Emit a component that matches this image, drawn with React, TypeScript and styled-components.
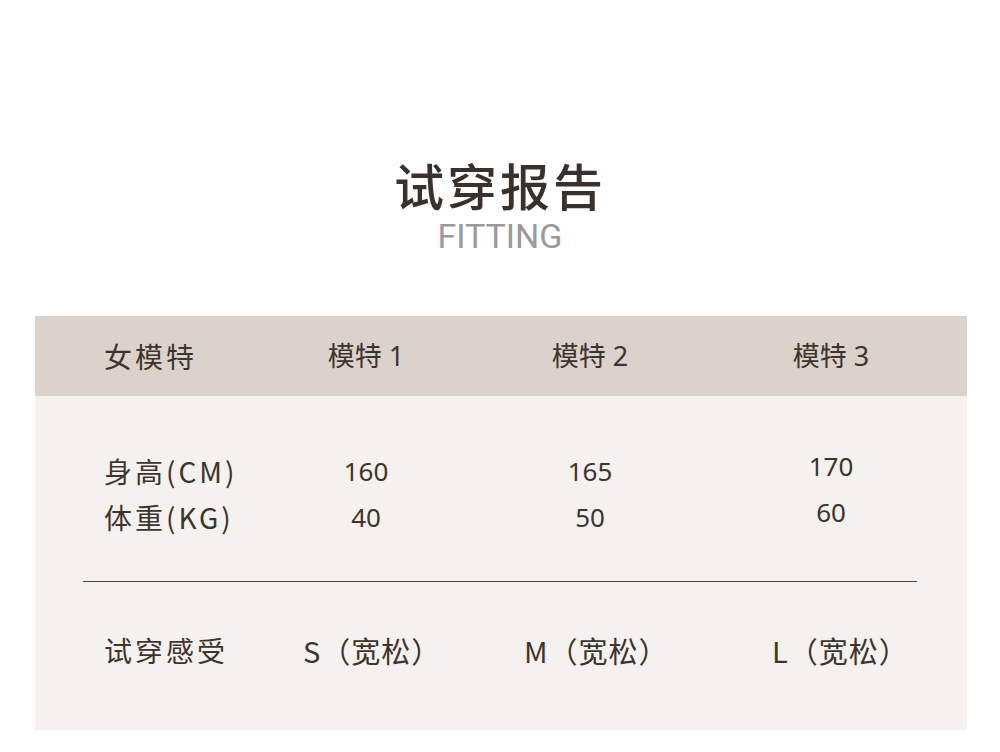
import React from "react"
import styled, { createGlobalStyle } from "styled-components"

const GlobalStyle = createGlobalStyle`
  html, body {
    margin: 0;
    padding: 0;
    background: #fff;
  }
  body {
    font-family: "Noto Sans", "Noto Sans CJK SC", sans-serif;
    color: #3d342e;
  }
`

const Page = styled.div`
  width: 1000px;
  height: 752px;
  background: #fff;
  overflow: hidden;
`

const Heading = styled.div`
  display: flex;
  flex-direction: column;
  align-items: center;
  padding-top: 155px;
  height: 316px;
  box-sizing: border-box;
`

const Title = styled.h1`
  margin: 0;
  font-family: "Noto Sans CJK SC", sans-serif;
  font-size: 50px;
  font-weight: 500;
  line-height: 58px;
  letter-spacing: 3px;
  color: #3b312c;
`

const Subtitle = styled.div`
  font-family: Roboto, "Noto Sans", sans-serif;
  font-size: 34px;
  line-height: 34px;
  color: #9a9a9a;
  margin-top: 6px;
`

const Table = styled.div`
  margin: 0 33px 0 35px;
  display: flex;
  flex-direction: column;
`

const Grid = styled.div`
  display: grid;
  grid-template-columns: 152px 220px 228px 254px;
  align-items: center;
  padding-left: 69px;
`

const HeaderRow = styled(Grid)`
  height: 80px;
  background: #dbd2cc;
`

const Body = styled.div`
  background: #f4f1ee;
  height: 334px;
  display: flex;
  flex-direction: column;
`

const Row = styled(Grid)<{ $height: number; $shift: number }>`
  height: ${(p) => p.$height}px;
  box-sizing: border-box;
  padding-top: ${(p) => Math.max(p.$shift, 0) * 2}px;
  padding-bottom: ${(p) => Math.max(-p.$shift, 0) * 2}px;
`

const Divider = styled.div`
  height: 1px;
  background: #4a413b;
  margin: 0 50px 0 48px;
`

const Label = styled.div`
  font-family: "Noto Sans CJK SC", sans-serif;
  font-size: 28px;
  letter-spacing: 3px;
  line-height: 46px;
  font-weight: 400;
  white-space: nowrap;
`

const Cell = styled.div<{ $lift?: number }>`
  font-family: "Noto Sans", "Noto Sans CJK SC", sans-serif;
  font-size: 26px;
  line-height: 46px;
  text-align: center;
  white-space: nowrap;
  padding-bottom: ${(p) => (p.$lift ? p.$lift * 2 : 0)}px;
`

const Head = styled(Cell)`
  font-size: 27px;
`

const Feel = styled(Cell)<{ $pad: number }>`
  font-family: "Noto Sans CJK SC", sans-serif;
  font-size: 29px;
  letter-spacing: 1px;
  text-align: left;
  padding-left: ${(p) => p.$pad}px;
`

const models = [
  { name: "模特 1", height: "160", weight: "40", size: "S", lift: 0, pad: 47 },
  { name: "模特 2", height: "165", weight: "50", size: "M", lift: 0, pad: 48 },
  { name: "模特 3", height: "170", weight: "60", size: "L", lift: 5, pad: 68 },
]

export default function App() {
  return (
    <Page>
      <GlobalStyle />
      <Heading>
        <Title>试穿报告</Title>
        <Subtitle>FITTING</Subtitle>
      </Heading>
      <Table>
        <HeaderRow>
          <Label>女模特</Label>
          {models.map((m) => (
            <Head key={m.name}>{m.name}</Head>
          ))}
        </HeaderRow>
        <Body>
          <Row $height={185} $shift={5}>
            <div>
              <Label>身高(CM)</Label>
              <Label>体重(KG)</Label>
            </div>
            {models.map((m) => (
              <Cell key={m.name} $lift={m.lift}>
                <div>{m.height}</div>
                <div>{m.weight}</div>
              </Cell>
            ))}
          </Row>
          <Divider />
          <Row $height={148} $shift={-6}>
            <Label>试穿感受</Label>
            {models.map((m) => (
              <Feel key={m.name} $pad={m.pad}>
                {m.size}（宽松）
              </Feel>
            ))}
          </Row>
        </Body>
      </Table>
    </Page>
  )
}
